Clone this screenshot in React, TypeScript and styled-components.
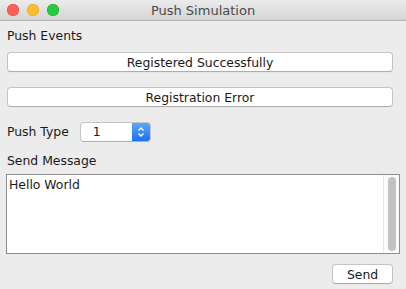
import * as React from 'react';
import styled, { createGlobalStyle } from 'styled-components';

const GlobalStyle = createGlobalStyle`
  html, body {
    margin: 0;
    padding: 0;
    background: #ececec;
  }
  * {
    box-sizing: border-box;
  }
`;

const Window = styled.div`
  width: 406px;
  height: 289px;
  display: flex;
  flex-direction: column;
  background: #ececec;
  font-family: 'DejaVu Sans', 'Liberation Sans', sans-serif;
  font-size: 12.4px;
  color: #1a1a1a;
  overflow: hidden;
`;

const TitleBar = styled.div`
  height: 21px;
  flex-shrink: 0;
  display: flex;
  align-items: center;
  position: relative;
  background: linear-gradient(#ebebeb, #d5d5d5);
  border-bottom: 1px solid #b1b1b1;
  padding-left: 7px;
  gap: 8px;
`;

const Light = styled.span<{ $color: string; $edge: string }>`
  width: 12px;
  height: 12px;
  border-radius: 50%;
  background: ${(p) => p.$color};
  box-shadow: inset 0 0 0 0.5px ${(p) => p.$edge};
`;

const Title = styled.div`
  position: absolute;
  left: 0;
  right: 0;
  top: 0;
  bottom: 0;
  display: flex;
  align-items: center;
  justify-content: center;
  font-size: 13px;
  color: #4a4a4a;
  pointer-events: none;
`;

const Body = styled.div`
  flex: 1;
  display: flex;
  flex-direction: column;
  padding: 7px 13px 0 7px;
`;

const Label = styled.div<{ $mt?: number }>`
  height: 16px;
  line-height: 16px;
  margin-top: ${(p) => p.$mt || 0}px;
`;

const Button = styled.button<{ $mt?: number }>`
  height: 20px;
  margin-top: ${(p) => p.$mt || 0}px;
  border: 1px solid #c4c4c4;
  border-bottom-color: #adadad;
  border-radius: 4px;
  background: #ffffff;
  font-family: inherit;
  font-size: inherit;
  color: #1a1a1a;
  padding: 0;
  box-shadow: 0 0.5px 0 rgba(0, 0, 0, 0.05);
`;

const Row = styled.div`
  display: flex;
  align-items: center;
  gap: 11px;
  margin-top: 15px;
  height: 20px;
`;

const Select = styled.div`
  width: 71px;
  height: 20px;
  display: flex;
  border: 1px solid #c4c4c4;
  border-bottom-color: #adadad;
  border-radius: 4px;
  background: #fff;
  overflow: hidden;
`;

const SelectValue = styled.div`
  flex: 1;
  padding-left: 12px;
  line-height: 18px;
`;

const SelectArrows = styled.div`
  width: 18px;
  background: linear-gradient(#5aa7fb, #1a73f0);
  display: flex;
  align-items: center;
  justify-content: center;
`;

const TextArea = styled.div`
  margin-top: 5px;
  margin-left: -1px;
  margin-right: -7px;
  height: 80px;
  border: 1px solid #8e8e8e;
  background: #fff;
  display: flex;
`;

const TextContent = styled.div`
  flex: 1;
  padding: 2px 0 0 2px;
  line-height: 16px;
`;

const ScrollTrack = styled.div`
  width: 16px;
  border-left: 1px solid #e8e8e8;
  background: #fafafa;
  display: flex;
  justify-content: center;
  padding: 2px 0;
`;

const ScrollThumb = styled.div`
  width: 8px;
  border-radius: 4px;
  background: #c2c2c2;
`;

const Footer = styled.div`
  display: flex;
  justify-content: flex-end;
  margin-top: 10px;
`;

const SendButton = styled(Button)`
  width: 61px;
`;

export default function App() {
  return (
    <>
      <GlobalStyle />
      <Window>
        <TitleBar>
          <Light $color="#fc5f57" $edge="#de4a41" />
          <Light $color="#fdbc2e" $edge="#dea123" />
          <Light $color="#28c840" $edge="#1aab29" />
          <Title>Push Simulation</Title>
        </TitleBar>
        <Body>
          <Label>Push Events</Label>
          <Button $mt={8}>Registered Successfully</Button>
          <Button $mt={15}>Registration Error</Button>
          <Row>
            <Label>Push Type</Label>
            <Select>
              <SelectValue>1</SelectValue>
              <SelectArrows>
                <svg width="8" height="12" viewBox="0 0 8 12">
                  <path d="M1.5 4.5 L4 2 L6.5 4.5 M1.5 7.5 L4 10 L6.5 7.5" fill="none" stroke="#fff" strokeWidth="1.3" />
                </svg>
              </SelectArrows>
            </Select>
          </Row>
          <Label $mt={11}>Send Message</Label>
          <TextArea>
            <TextContent>Hello World</TextContent>
            <ScrollTrack>
              <ScrollThumb />
            </ScrollTrack>
          </TextArea>
          <Footer>
            <SendButton>Send</SendButton>
          </Footer>
        </Body>
      </Window>
    </>
  );
}
